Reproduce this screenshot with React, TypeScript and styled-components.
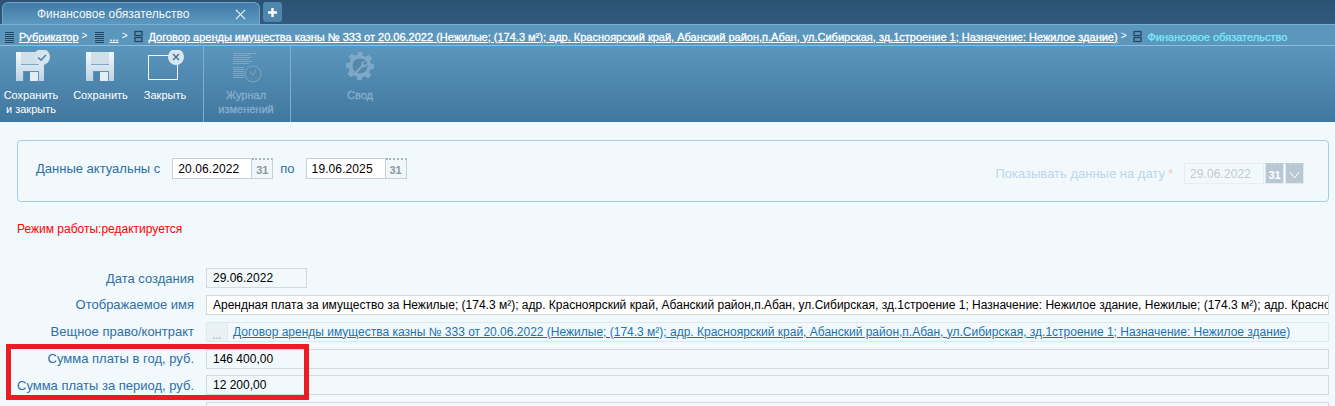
import styled, { createGlobalStyle } from "styled-components";

const GlobalStyle = createGlobalStyle`
  html, body {
    margin: 0;
    padding: 0;
    background: #f1f9fd;
    font-family: "Liberation Sans", Arial, sans-serif;
    font-size: 12px;
    overflow: hidden;
  }
`;

const Page = styled.div`
  position: relative;
  width: 1335px;
  height: 406px;
  overflow: hidden;
`;

const TabBar = styled.div`
  display: flex;
  align-items: flex-end;
  gap: 3px;
  height: 24px;
  padding-left: 2px;
  box-sizing: border-box;
  background: linear-gradient(#2c5273, #32597d);
`;

const Tab = styled.div`
  display: flex;
  align-items: center;
  justify-content: space-between;
  box-sizing: border-box;
  width: 258px;
  height: 22px;
  padding: 1px 13px 0 34px;
  border-radius: 6px 6px 0 0;
  border: 1px solid #6ea6ca;
  border-bottom: none;
  background: linear-gradient(#3f7ba6, #5d98bf);
  color: #f2f8fc;
  font-size: 12px;
`;

const PlusButton = styled.div`
  display: flex;
  align-items: center;
  justify-content: center;
  width: 19px;
  height: 20px;
  margin-bottom: 2px;
  border-radius: 3px;
  background: #4f86ad;
`;

const Crumbs = styled.div`
  display: flex;
  align-items: center;
  box-sizing: border-box;
  height: 22px;
  padding: 3px 0 0 4px;
  background: #5b97bd;
  border-top: 1px solid #78b0d3;
  border-bottom: 1px solid #8fbcd8;
  color: #fff;
  font-size: 11px;
  white-space: nowrap;
`;

const CrumbLink = styled.a`
  color: #fff;
  text-decoration: underline;
  margin-left: 4px;
  -webkit-text-stroke: 0.3px #fff;
`;

const CrumbCurrent = styled.span`
  color: #7eeafa;
  margin-left: 4px;
  -webkit-text-stroke: 0.25px #7eeafa;
`;

const CrumbSep = styled.span`
  margin: -3px 7px 0 3px;
  font-size: 10px;
`;

const Toolbar = styled.div`
  display: flex;
  height: 76px;
  background: linear-gradient(#5b96bc, #40779f);
`;

const ToolGroup = styled.div<{ $width: number; $divided?: boolean }>`
  display: flex;
  width: ${(p) => p.$width}px;
  flex: none;
  border-right: ${(p) => (p.$divided ? "1px solid #80aecb" : "none")};
`;

const ToolButton = styled.div<{ $width: number; $disabled?: boolean }>`
  display: flex;
  flex-direction: column;
  align-items: center;
  flex: none;
  width: ${(p) => p.$width}px;
  padding-top: 4px;
  color: ${(p) => (p.$disabled ? "#86aecb" : "#fff")};
  font-size: 11px;
  -webkit-text-stroke: ${(p) => (p.$disabled ? "0.3px #86aecb" : "0")};
  line-height: 14px;
  text-align: center;
`;

const ToolIcon = styled.div`
  height: 33px;
  margin-bottom: 5px;
`;

const Content = styled.div`
  padding: 18px 6px 0 17px;
`;

const FilterPanel = styled.div`
  display: flex;
  align-items: center;
  justify-content: space-between;
  box-sizing: border-box;
  height: 62px;
  padding: 0 24px 5px 18px;
  border: 1px solid #a9cce5;
  border-radius: 4px;
`;

const FilterGroup = styled.div`
  display: flex;
  align-items: center;
`;

const ShowDateGroup = styled(FilterGroup)`
  margin-top: 10px;
`;

const FieldLabel = styled.span<{ $muted?: boolean }>`
  margin-right: ${(p) => (p.$muted ? 11 : 12)}px;
  color: ${(p) => (p.$muted ? "#bcd6e9" : "#2f6fa3")};
  font-size: 13px;
`;

const Star = styled.span`
  color: #f8c4c4;
  margin-left: 3px;
`;

const DateInput = styled.div<{ $muted?: boolean }>`
  display: flex;
  align-items: center;
  box-sizing: border-box;
  width: 80px;
  height: 21px;
  padding-left: 5px;
  border: 1px solid ${(p) => (p.$muted ? "#e6eef3" : "#c5d0d8")};
  background: ${(p) => (p.$muted ? "transparent" : "#fff")};
  color: ${(p) => (p.$muted ? "#c4c9cd" : "#000")};
  letter-spacing: 0.1px;
`;

const CalButton = styled.div`
  display: flex;
  align-items: center;
  justify-content: center;
  box-sizing: border-box;
  width: 21px;
  height: 21px;
  padding-top: 2px;
  border: 1px solid #c5d0d8;
  border-left: none;
  border-top: 2px dotted #a9b5bf;
  background: #f1f6f9;
  color: #8a98a4;
  font-size: 11px;
  font-weight: bold;
  line-height: 1;
`;

const SolidCalButton = styled(CalButton)`
  width: 19px;
  margin-left: 1px;
  border: 1px solid #e3e9ee;
  border-top: 2px dotted #c2ced8;
  background: #b7c7d4;
  color: #fff;
`;

const Joiner = styled.span`
  margin: 0 11px 0 7px;
  color: #2f6fa3;
  font-size: 13px;
`;

const StatusLine = styled.div`
  margin-top: 20px;
  height: 14px;
  line-height: 14px;
  color: #f00;
`;

const Form = styled.div`
  display: flex;
  flex-direction: column;
  gap: 6.5px;
  margin-top: 32px;
`;

const FormRow = styled.div`
  display: flex;
  align-items: center;
  gap: 12px;
  height: 20.3px;
`;

const RowLabel = styled.label`
  flex: none;
  width: 177px;
  text-align: right;
  color: #2f6fa3;
  font-size: 13px;
  white-space: nowrap;
`;

const ReadOnlyBox = styled.div<{ $narrow?: boolean; $white?: boolean }>`
  display: flex;
  align-items: center;
  box-sizing: border-box;
  flex: ${(p) => (p.$narrow ? "none" : "1")};
  width: ${(p) => (p.$narrow ? "101px" : "auto")};
  min-width: 0;
  height: 20px;
  padding: 0 6px;
  border: 1px solid #d3dade;
  background: ${(p) => (p.$white ? "#fff" : "transparent")};
  color: #000;
  white-space: nowrap;
  overflow: hidden;
`;

const PickerBox = styled(ReadOnlyBox)`
  padding: 0;
  border-color: #dfe8ee;
`;

const DotsButton = styled.span`
  display: flex;
  flex: none;
  justify-content: center;
  align-items: flex-end;
  box-sizing: border-box;
  width: 21px;
  height: 100%;
  padding-bottom: 1px;
  border-right: 1px solid #dfe8ee;
  background: #eaf1f5;
  color: #c0c8ce;
  font-weight: bold;
  font-size: 11px;
  line-height: 9px;
`;

const ContractLink = styled.a`
  margin-left: 5px;
  color: #1c74ae;
  text-decoration: underline;
`;

// red marker that was drawn over the screenshot
const Highlight = styled.div`
  position: absolute;
  left: 6px;
  top: 344px;
  width: 303px;
  height: 56px;
  box-sizing: border-box;
  border: 5px solid #ed1c24;
  pointer-events: none;
`;

const ListIcon = () => (
  <svg width="11" height="13" viewBox="0 0 11 13">
    {[2, 4, 6, 8, 10, 12].map((y) => (
      <rect key={y} x="1" y={y} width="9" height="1" fill="#26455f" />
    ))}
  </svg>
);

const RecordIcon = () => (
  <svg width="10" height="15" viewBox="0 0 10 15" fill="none" stroke="#26455f" strokeWidth="1.300">
    <rect x="1" y="2.500" width="7" height="4" />
    <rect x="1" y="8.500" width="7" height="4" />
  </svg>
);

const SaveIcon = ({ check }: { check?: boolean }) => (
  <svg width="52" height="33" viewBox="-11 0 52 33">
    <defs>
      <linearGradient id="disk" x1="0" y1="0" x2="0" y2="1">
        <stop offset="0" stopColor="#f4f8fb" />
        <stop offset="1" stopColor="#bcd3e3" />
      </linearGradient>
    </defs>
    <path d="M0 2h28v29H0z" fill="url(#disk)" />
    <path d="M5 2h18v13H5z" fill="#7ba8c8" />
    <path d="M5 2h18v12H5z" fill="#cfe0eb" />
    <path d="M7 21h16v10H7z" fill="#5f93b7" />
    <path d="M8 22h14v9H8z" fill="#e3edf4" />
    <path d="M8 22h6v9H8z" fill="#4d86ae" />
    {check && (
      <g>
        <circle cx="26" cy="7" r="8" fill="#d5e4ee" />
        <path d="M22 7.500l3 2.500 5-5" fill="none" stroke="#44769b" strokeWidth="1.300" />
      </g>
    )}
  </svg>
);

const CloseIcon = () => (
  <svg width="40" height="33" viewBox="0 0 40 33">
    <rect x="3.500" y="5.500" width="29" height="24" fill="none" stroke="#f2f7fa" strokeWidth="1" />
    <circle cx="31" cy="7" r="8" fill="#dbe7ef" />
    <path d="M28 4l6 6M34 4l-6 6" stroke="#44769b" strokeWidth="1.500" />
  </svg>
);

const JournalIcon = () => (
  <svg width="32" height="33" viewBox="0 0 32 33" fill="none" stroke="#7da7c4" strokeWidth="1">
    {[3, 5, 7, 9, 11, 13].map((y, i) => (
      <path key={y} d={`M3 ${y + 0.5}h${i === 0 ? 23 : i % 2 ? 16 : 19}`} />
    ))}
    {[17, 19, 21, 23, 25, 27].map((y) => (
      <path key={y} d={`M3 ${y + 0.5}h11`} />
    ))}
    <circle cx="23" cy="24" r="8" fill="#5489ae" />
    <path d="M19.500 21.500l3.500 3.500 3-5" />
  </svg>
);

const GearIcon = () => (
  <svg width="28" height="33" viewBox="0 -1.700 24 28.300" fill="#7ea9c6">
    <path d="M10 0h4l.6 3.200 2.200.9L19.500 2.300l2.800 2.800-1.800 2.700.9 2.200L24 10.600v3.800l-3.200.6-.9 2.200 1.800 2.700-2.800 2.800-2.700-1.800-2.200.9L13.400 24h-3.800l-.6-3.200-2.200-.9-2.700 1.800-2.800-2.800 1.800-2.700-.9-2.200L0 13.400v-3.800l3.200-.6.9-2.200L2.300 4.100l2.800-2.800 2.700 1.800 2.200-.9z" />
    <circle cx="12" cy="12" r="6.500" fill="#5388ad" />
    <path d="M8 17l5-5.500a3 3 0 0 1 3.500-3.700l-1.800 1.900 1.300 1.400 2-1.700a3 3 0 0 1-4 3.700L9.300 18.300z" fill="#7ea9c6" />
  </svg>
);

const CONTRACT =
  "Договор аренды имущества казны № 333 от 20.06.2022 (Нежилые; (174.3 м²); адр. Красноярский край, Абанский район,п.Абан, ул.Сибирская, зд.1строение 1; Назначение: Нежилое здание)";

const DISPLAY_NAME =
  "Арендная плата за имущество за Нежилые; (174.3 м²); адр. Красноярский край, Абанский район,п.Абан, ул.Сибирская, зд.1строение 1; Назначение: Нежилое здание, Нежилые; (174.3 м²); адр. Красно";

export default function App() {
  return (
    <Page>
      <GlobalStyle />
      <TabBar>
        <Tab>
          <span>Финансовое обязательство</span>
          <svg width="11" height="11" viewBox="0 0 12 12" stroke="#eef5fa" strokeWidth="1.200">
            <path d="M1 1l10 10M11 1L1 11" />
          </svg>
        </Tab>
        <PlusButton>
          <svg width="11" height="11" viewBox="0 0 11 11" stroke="#fff" strokeWidth="2.400">
            <path d="M5.500 1v9M1 5.500h9" />
          </svg>
        </PlusButton>
      </TabBar>

      <Crumbs>
        <ListIcon />
        <CrumbLink>Рубрикатор</CrumbLink>
        <CrumbSep>&gt;</CrumbSep>
        <ListIcon />
        <CrumbLink>...</CrumbLink>
        <CrumbSep>&gt;</CrumbSep>
        <RecordIcon />
        <CrumbLink>{CONTRACT}</CrumbLink>
        <CrumbSep>&gt;</CrumbSep>
        <RecordIcon />
        <CrumbCurrent>Финансовое обязательство</CrumbCurrent>
      </Crumbs>

      <Toolbar>
        <ToolGroup $width={203} $divided>
          <ToolButton $width={62}>
            <ToolIcon>
              <SaveIcon check />
            </ToolIcon>
            Сохранить
            <br />и закрыть
          </ToolButton>
          <ToolButton $width={77}>
            <ToolIcon>
              <SaveIcon />
            </ToolIcon>
            Сохранить
          </ToolButton>
          <ToolButton $width={52}>
            <ToolIcon>
              <CloseIcon />
            </ToolIcon>
            Закрыть
          </ToolButton>
        </ToolGroup>
        <ToolGroup $width={86} $divided>
          <ToolButton $width={84} $disabled>
            <ToolIcon>
              <JournalIcon />
            </ToolIcon>
            Журнал
            <br />
            изменений
          </ToolButton>
        </ToolGroup>
        <ToolGroup $width={140}>
          <ToolButton $width={138} $disabled>
            <ToolIcon>
              <GearIcon />
            </ToolIcon>
            Свод
          </ToolButton>
        </ToolGroup>
      </Toolbar>

      <Content>
        <FilterPanel>
          <FilterGroup>
            <FieldLabel>Данные актуальны с</FieldLabel>
            <DateInput>20.06.2022</DateInput>
            <CalButton>31</CalButton>
            <Joiner>по</Joiner>
            <DateInput>19.06.2025</DateInput>
            <CalButton>31</CalButton>
          </FilterGroup>
          <ShowDateGroup>
            <FieldLabel $muted>
              Показывать данные на дату<Star>*</Star>
            </FieldLabel>
            <DateInput $muted>29.06.2022</DateInput>
            <SolidCalButton>31</SolidCalButton>
            <SolidCalButton>
              <svg width="11" height="8" viewBox="0 0 11 8" fill="none" stroke="#fff">
                <path d="M1 1l4.500 6L10 1" />
              </svg>
            </SolidCalButton>
          </ShowDateGroup>
        </FilterPanel>

        <StatusLine>Режим работы:редактируется</StatusLine>

        <Form>
          <FormRow>
            <RowLabel>Дата создания</RowLabel>
            <ReadOnlyBox $narrow>29.06.2022</ReadOnlyBox>
          </FormRow>
          <FormRow>
            <RowLabel>Отображаемое имя</RowLabel>
            <ReadOnlyBox $white>{DISPLAY_NAME}</ReadOnlyBox>
          </FormRow>
          <FormRow>
            <RowLabel>Вещное право/контракт</RowLabel>
            <PickerBox>
              <DotsButton>...</DotsButton>
              <ContractLink>{CONTRACT}</ContractLink>
            </PickerBox>
          </FormRow>
          <FormRow>
            <RowLabel>Сумма платы в год, руб.</RowLabel>
            <ReadOnlyBox>146 400,00</ReadOnlyBox>
          </FormRow>
          <FormRow>
            <RowLabel>Сумма платы за период, руб.</RowLabel>
            <ReadOnlyBox>12 200,00</ReadOnlyBox>
          </FormRow>
          <FormRow>
            <RowLabel />
            <ReadOnlyBox />
          </FormRow>
        </Form>
      </Content>

      <Highlight />
    </Page>
  );
}
